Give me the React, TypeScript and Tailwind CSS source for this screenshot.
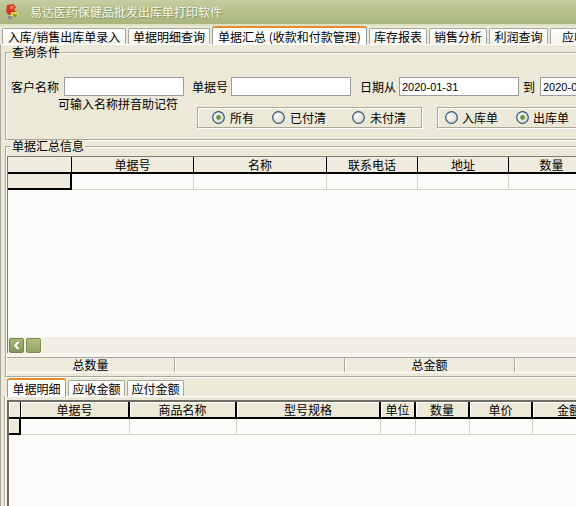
import React from "react";

const tabs = [
  { label: "入库/销售出库单录入", w: "w-[124px]", active: false },
  { label: "单据明细查询", w: "w-[82px]", active: false },
  { label: "单据汇总 (收款和付款管理)", w: "w-[155px]", active: true },
  { label: "库存报表", w: "w-[58px]", active: false },
  { label: "销售分析", w: "w-[58px]", active: false },
  { label: "利润查询", w: "w-[59px]", active: false },
  { label: "应收款", w: "w-[60px]", active: false },
];

const topCols = [
  { label: "单据号", w: "w-[122px]" },
  { label: "名称", w: "w-[133px]" },
  { label: "联系电话", w: "w-[91px]" },
  { label: "地址", w: "w-[91px]" },
  { label: "数量", w: "w-[86px]" },
];

const bottomCols = [
  { label: "单据号", w: "w-[109px]" },
  { label: "商品名称", w: "w-[107px]" },
  { label: "型号规格", w: "w-[144px]" },
  { label: "单位", w: "w-[35px]" },
  { label: "数量", w: "w-[54px]" },
  { label: "单价", w: "w-[63px]" },
  { label: "金额", w: "w-[74px]" },
];

function AppIcon() {
  return (
    <svg width="18" height="18" viewBox="0 0 18 18">
      <path d="M3 2 L9 1 L12 4 L10 7 L13 9 L9 11 L5 12 L2 9 Z" fill="#d8342a" />
      <path d="M6 3 L10 3 L9 6 L6 6 Z" fill="#f08a3c" />
      <rect x="7" y="9" width="7" height="5" fill="#e8d84a" />
      <rect x="9" y="11" width="4" height="3" fill="#7da23c" />
      <rect x="4" y="13" width="4" height="3" fill="#8a8aa8" />
    </svg>
  );
}

function Radio({ checked }: { checked: boolean }) {
  return (
    <svg width="13" height="13" viewBox="0 0 13 13" className="shrink-0">
      <defs>
        <radialGradient id="radioFill" cx="0.35" cy="0.35" r="0.8">
          <stop offset="0" stopColor="#ffffff" />
          <stop offset="1" stopColor="#d6d2c2" />
        </radialGradient>
      </defs>
      <circle cx="6.5" cy="6.5" r="5.8" fill="url(#radioFill)" stroke="#2a5582" strokeWidth="1.2" />
      {checked && <circle cx="6.5" cy="6.5" r="2.4" fill="#5c9a3c" />}
    </svg>
  );
}

function TextBox({ value }: { value?: string }) {
  return (
    <div className="w-[120px] h-[19px] shrink-0 bg-white border border-[#9c9c9c] flex items-center pl-[2px] font-['Liberation_Sans',sans-serif] text-[11px]">
      {value}
    </div>
  );
}

function Tab({ label, w, active }: { label: string; w: string; active: boolean }) {
  if (active) {
    return (
      <div
        className={`${w} h-[19px] -mb-px relative z-10 shrink-0 bg-white border border-b-0 border-[#919b9c] border-t-[2px] border-t-[#e68b2c] rounded-t-[3px] flex items-center justify-center whitespace-nowrap`}
      >
        {label}
      </div>
    );
  }
  return (
    <div
      className={`${w} h-[16px] shrink-0 bg-gradient-to-b from-white to-[#f3f3ee] border border-b-0 border-[#a7a69b] rounded-t-[2px] flex items-center justify-center whitespace-nowrap overflow-hidden`}
    >
      {label}
    </div>
  );
}

export default function App() {
  return (
    <div className="w-[576px] h-[506px] overflow-hidden bg-[#ece9d8] text-[12px] leading-[12px] text-black font-['Noto_Sans_CJK_SC','Liberation_Sans',sans-serif] flex flex-col">
      {/* title bar */}
      <div className="h-[24px] shrink-0 flex items-center pl-[4px] gap-[8px] bg-gradient-to-b from-[#c6cea2] via-[#b3be88] to-[#aab67e]">
        <AppIcon />
        <span className="text-[#f4f5e8] [text-shadow:1px_1px_0_#8d9866]">易达医药保健品批发出库单打印软件</span>
      </div>
      <div className="h-[2px] shrink-0 bg-[#dde1c6]" />

      {/* main tabs */}
      <div className="h-[18px] shrink-0 flex items-end gap-[2px] pl-[2px]">
        {tabs.map((t) => (
          <Tab key={t.label} label={t.label} w={t.w} active={t.active} />
        ))}
      </div>

      {/* tab page */}
      <div className="flex-1 border-t border-white border-l border-l-[#aca899] flex flex-col">
        {/* 查询条件 */}
        <div className="relative ml-[4px] mt-[7px] h-[88px] w-[640px] shrink-0 border border-[#aca899] shadow-[inset_1px_1px_0_#fff,1px_1px_0_#fff]">
          <span className="absolute left-[5px] top-[-7px] bg-[#ece9d8] px-[1px]">查询条件</span>
          <div className="flex items-center h-[19px] mt-[24px] pl-[5px]">
            <span className="w-[48px] shrink-0">客户名称</span>
            <div className="ml-[5px]">
              <TextBox />
            </div>
            <span className="ml-[8px] w-[36px] shrink-0">单据号</span>
            <div className="ml-[3px]">
              <TextBox />
            </div>
            <span className="ml-[9px] w-[36px] shrink-0">日期从</span>
            <div className="ml-[3px]">
              <TextBox value="2020-01-31" />
            </div>
            <span className="ml-[4px] w-[12px] shrink-0">到</span>
            <div className="ml-[5px]">
              <TextBox value="2020-01-31" />
            </div>
          </div>
          <div className="flex items-start pl-[5px]">
            <span className="ml-[47px] mt-[2px] w-[120px] shrink-0 whitespace-nowrap">可输入名称拼音助记符</span>
            <div className="ml-[19px] mt-[11px] h-[21px] w-[225px] shrink-0 border border-[#aca899] shadow-[inset_1px_1px_0_#fff,1px_1px_0_#fff] flex items-center pl-[14px]">
              <div className="w-[60px] flex items-center gap-[5px]">
                <Radio checked />
                <span>所有</span>
              </div>
              <div className="w-[80px] flex items-center gap-[5px]">
                <Radio checked={false} />
                <span>已付清</span>
              </div>
              <div className="flex items-center gap-[5px]">
                <Radio checked={false} />
                <span>未付清</span>
              </div>
            </div>
            <div className="ml-[15px] mt-[11px] h-[21px] w-[170px] shrink-0 border border-[#aca899] shadow-[inset_1px_1px_0_#fff,1px_1px_0_#fff] flex items-center pl-[7px]">
              <div className="w-[71px] flex items-center gap-[4px]">
                <Radio checked={false} />
                <span>入库单</span>
              </div>
              <div className="flex items-center gap-[4px]">
                <Radio checked />
                <span>出库单</span>
              </div>
            </div>
          </div>
        </div>

        {/* 单据汇总信息 */}
        <div className="relative ml-[4px] mt-[6px] h-[231px] w-[640px] shrink-0 border border-[#aca899] shadow-[inset_1px_1px_0_#fff,1px_1px_0_#fff] flex flex-col">
          <span className="absolute left-[5px] top-[-7px] bg-[#ece9d8] px-[1px]">单据汇总信息</span>
          <div className="ml-[1px] mt-[9px] h-[197px] w-[700px] border-l border-t border-[#7b7b72] bg-[#fcfcfa] flex flex-col">
            <div className="flex h-[17px] border-b-2 border-black bg-[#efecdf]">
              <div className="w-[64px] border-r border-black" />
              {topCols.map((c) => (
                <div key={c.label} className={`${c.w} border-r border-black flex items-center justify-center`}>
                  {c.label}
                </div>
              ))}
            </div>
            <div className="flex h-[16px]">
              <div className="w-[64px] bg-[#efecdf] border-r-2 border-b-2 border-black" />
              {topCols.map((c) => (
                <div key={c.label} className={`${c.w} border-r border-b border-[#d8d6cc]`} />
              ))}
            </div>
            <div className="flex-1" />
            <div className="h-[16px] flex items-center bg-[#f1efe4]">
              <div className="ml-[1px] w-[15px] h-[15px] rounded-[2px] bg-gradient-to-b from-[#a9b67a] to-[#86955a] border border-[#75834a] flex items-center justify-center">
                <svg width="7" height="9" viewBox="0 0 7 9">
                  <path d="M5.5 1 L2 4.5 L5.5 8" stroke="#fff" strokeWidth="1.8" fill="none" />
                </svg>
              </div>
              <div className="ml-[2px] w-[15px] h-[15px] rounded-[2px] bg-gradient-to-b from-[#b2bd84] to-[#95a367] border border-[#7f8c52]" />
            </div>
          </div>
          <div className="h-[4px] bg-[#f6f5ef]" />
          <div className="ml-[1px] h-[16px] flex border-t border-[#aca899] border-b border-b-white bg-[#efecdf]">
            <div className="w-[168px] border-r border-[#aca899] shadow-[1px_0_0_#fff] flex items-center justify-center">总数量</div>
            <div className="w-[170px] border-r border-[#aca899] shadow-[1px_0_0_#fff]" />
            <div className="w-[170px] border-r border-[#aca899] shadow-[1px_0_0_#fff] flex items-center justify-center">总金额</div>
            <div className="flex-1" />
          </div>
        </div>

        {/* bottom tabs */}
        <div className="mt-[1px] ml-[6px] h-[18px] shrink-0 flex items-end gap-[2px]">
          <Tab label="单据明细" w="w-[59px]" active />
          <Tab label="应收金额" w="w-[57px]" active={false} />
          <Tab label="应付金额" w="w-[57px]" active={false} />
        </div>
        <div className="flex-1 ml-[4px] border-t border-l border-white shadow-[-1px_0_0_#aca899] flex flex-col">
          <div className="ml-[1px] mt-[3px] flex-1 w-[700px] border-l-2 border-t-2 border-[#6f6d63] bg-[#fcfcfa] flex flex-col">
            <div className="flex h-[17px] border-b-2 border-black bg-[#ece9d8]">
              <div className="w-[12px] border-r border-black shadow-[inset_1px_1px_0_#fff]" />
              {bottomCols.map((c) => (
                <div key={c.label} className={`${c.w} border-r-2 border-black shadow-[inset_1px_1px_0_#fff] flex items-center justify-center`}>
                  {c.label}
                </div>
              ))}
            </div>
            <div className="flex h-[16px]">
              <div className="w-[12px] bg-[#ece9d8] border-r-2 border-b-2 border-black shadow-[inset_1px_1px_0_#fff]" />
              {bottomCols.map((c) => (
                <div key={c.label} className={`${c.w} border-r border-b border-[#d8d6cc]`} />
              ))}
            </div>
          </div>
        </div>
      </div>
    </div>
  );
}
